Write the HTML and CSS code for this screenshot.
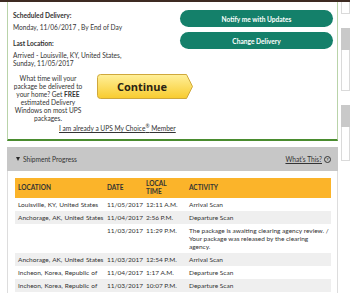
FILE: index.html
```html
<!DOCTYPE html>
<html>
<head>
    <title>Tracking Detail</title>
    <link rel="stylesheet" href="styles.css">
</head>
<body>
    <div class="topbar"></div>
    <div class="page">
        <div class="main">
            <div class="summary">
                <div class="summary-top">
                    <div class="delivery-info">
                        <div class="label">Scheduled Delivery:</div>
                        <div class="value">Monday, 11/06/2017 , By End of Day</div>
                        <div class="label label-gap">Last Location:</div>
                        <div class="value">Arrived - Louisville, KY, United States,<br>Sunday, 11/05/2017</div>
                    </div>
                    <div class="actions">
                        <button class="pill-btn">Notify me with Updates</button>
                        <button class="pill-btn">Change Delivery</button>
                    </div>
                </div>
                <div class="promo">
                    <p class="promo-text">What time will your package be delivered to your home? Get <b>FREE</b> estimated Delivery Windows on most UPS packages.</p>
                    <button class="continue">
                        <svg class="continue-shape" viewBox="0 0 96 25">
                            <defs>
                                <linearGradient id="gold" x1="0" y1="0" x2="0" y2="1">
                                    <stop offset="0" stop-color="#fff09a"/>
                                    <stop offset="1" stop-color="#f8cb2e"/>
                                </linearGradient>
                            </defs>
                            <path d="M3.5 0.5H89.5L95.5 12.5L89.5 24.5H3.5Q0.5 24.5 0.5 21.5V3.5Q0.5 0.5 3.5 0.5Z" fill="url(#gold)" stroke="#cfa83c"/>
                        </svg>
                        <span class="continue-label">Continue</span>
                    </button>
                </div>
                <a class="choice-link" href="#">I am already a UPS My Choice<sup>®</sup> Member</a>
            </div>

            <div class="progress">
                <div class="progress-head">
                    <span class="progress-title"><span class="caret"></span>Shipment Progress</span>
                    <span class="whats-this"><a href="#">What's This?</a><span class="help-icon">?</span></span>
                </div>
                <div class="progress-body">
                    <table class="scans">
                        <colgroup>
                            <col class="col-location">
                            <col class="col-date">
                            <col class="col-time">
                            <col class="col-activity">
                        </colgroup>
                        <thead>
                            <tr>
                                <th>LOCATION</th>
                                <th>DATE</th>
                                <th>LOCAL<br>TIME</th>
                                <th>ACTIVITY</th>
                            </tr>
                        </thead>
                        <tbody>
                            <tr>
                                <td class="place">Louisville, KY, United States</td>
                                <td>11/05/2017</td>
                                <td>12:11 A.M.</td>
                                <td class="activity">Arrival Scan</td>
                            </tr>
                            <tr>
                                <td class="place">Anchorage, AK, United States</td>
                                <td>11/04/2017</td>
                                <td>2:56 P.M.</td>
                                <td class="activity">Departure Scan</td>
                            </tr>
                            <tr>
                                <td class="place"></td>
                                <td>11/03/2017</td>
                                <td>11:29 P.M.</td>
                                <td class="activity">The package is awaiting clearing agency review. / Your package was released by the clearing<br>agency.</td>
                            </tr>
                            <tr>
                                <td class="place">Anchorage, AK, United States</td>
                                <td>11/03/2017</td>
                                <td>12:54 P.M.</td>
                                <td class="activity">Arrival Scan</td>
                            </tr>
                            <tr>
                                <td class="place">Incheon, Korea, Republic of</td>
                                <td>11/04/2017</td>
                                <td>1:17 A.M.</td>
                                <td class="activity">Departure Scan</td>
                            </tr>
                            <tr>
                                <td class="place">Incheon, Korea, Republic of</td>
                                <td>11/03/2017</td>
                                <td>10:07 P.M.</td>
                                <td class="activity">Departure Scan</td>
                            </tr>
                        </tbody>
                    </table>
                </div>
            </div>
        </div>

        <div class="side">
            <div class="side-box side-box-first"></div>
            <div class="side-head"></div>
            <div class="side-box side-box-tall"></div>
            <div class="side-head"></div>
            <div class="side-box side-box-short"></div>
        </div>
    </div>
</body>
</html>
```

FILE: styles.css
```css
body {
    margin: 0;
    padding: 0;
    background-color: #ffffff;
    color: #333333;
    font-family: Lato, "Open Sans", sans-serif;
    font-size: 6.6px;
    line-height: 8px;
    overflow: hidden;
}
.topbar {
    height: 2px;
    background-color: #3d2a22;
}
.page {
    display: flex;
    align-items: flex-start;
}
.main {
    width: 331px;
    margin-left: 7px;
    flex-shrink: 0;
}

/* delivery summary */
.summary {
    border-left: 1px solid #b9d3a9;
    border-right: 1px solid #b9d3a9;
    border-bottom: 2px solid #4a8c2f;
    padding: 8px 4px 7px 4px;
}
.summary-top {
    display: flex;
    justify-content: space-between;
}
.delivery-info {
    padding: 1px 0 0 1px;
}
.label {
    font-weight: bold;
}
.label-gap {
    margin-top: 7.5px;
}
.value {
    margin-top: 4px;
}
.actions {
    display: flex;
    flex-direction: column;
    gap: 5px;
    width: 153px;
}
.pill-btn {
    height: 17px;
    border: none;
    border-radius: 9px;
    background-color: #14806a;
    color: #ffffff;
    font-family: inherit;
    font-size: 6.6px;
    font-weight: bold;
    padding: 0;
    cursor: pointer;
}
.promo {
    display: flex;
    align-items: flex-start;
    margin-top: 7px;
}
.promo-text {
    width: 72px;
    margin: 0;
    text-align: center;
}
.continue {
    position: relative;
    width: 96px;
    height: 25px;
    margin: 0.5px 0 0 13px;
    padding: 0;
    border: none;
    background: none;
    cursor: pointer;
}
.continue-shape {
    position: absolute;
    left: 0;
    top: 0;
    width: 96px;
    height: 25px;
}
.continue-label {
    position: relative;
    display: block;
    width: 90px;
    font-family: "Open Sans", sans-serif;
    font-size: 11px;
    line-height: 25px;
    font-weight: 700;
    color: #2b2313;
    text-align: center;
}
.choice-link {
    display: block;
    margin: 2.5px 0 0 47px;
    color: #333333;
    text-decoration: underline;
}
.choice-link sup {
    font-size: 5px;
    line-height: 0;
}

/* shipment progress */
.progress {
    margin-top: 6px;
}
.progress-head {
    height: 24px;
    background-color: #c7c7c7;
    display: flex;
    align-items: center;
    justify-content: space-between;
    padding: 0 7px 0 9px;
}
.progress-title {
    display: flex;
    align-items: center;
}
.caret {
    width: 0;
    height: 0;
    border-left: 2.5px solid transparent;
    border-right: 2.5px solid transparent;
    border-top: 4px solid #2a2a2a;
    margin-right: 3px;
}
.whats-this {
    display: flex;
    align-items: center;
}
.whats-this a {
    color: #333333;
}
.help-icon {
    width: 5px;
    height: 5px;
    border: 0.8px solid #333333;
    border-radius: 50%;
    margin-left: 2px;
    font-size: 4.5px;
    line-height: 5px;
    font-weight: bold;
    text-align: center;
}
.progress-body {
    border-left: 1px solid #dddddd;
    border-right: 1px solid #dddddd;
    padding: 7px 6px 2px 7px;
}
.scans {
    width: 316px;
    table-layout: fixed;
    border-collapse: collapse;
    font-size: 6.5px;
}
.col-location { width: 89px; }
.col-date { width: 39px; }
.col-time { width: 43px; }
.col-activity { width: 145px; }
.scans th {
    background-color: #fbb42a;
    font-weight: bold;
    text-align: left;
    vertical-align: middle;
    padding: 2px 3px;
}
.scans td {
    vertical-align: top;
    padding: 2.5px 3px;
}
.scans td.place {
    white-space: nowrap;
    word-spacing: 0.5px;
}
.scans td.activity {
    padding-right: 0;
}
.scans tbody tr:nth-child(even) td {
    background-color: #efefef;
}

/* right column */
.side {
    flex-grow: 1;
    margin-left: 3px;
}
.side-box {
    border: 1px solid #dadada;
    border-top: none;
}
.side-box-first {
    height: 11px;
}
.side-box-tall {
    height: 40px;
}
.side-box-short {
    height: 33px;
}
.side-head {
    height: 22px;
    margin-top: 14px;
    background-color: #c9c9c9;
}
```
